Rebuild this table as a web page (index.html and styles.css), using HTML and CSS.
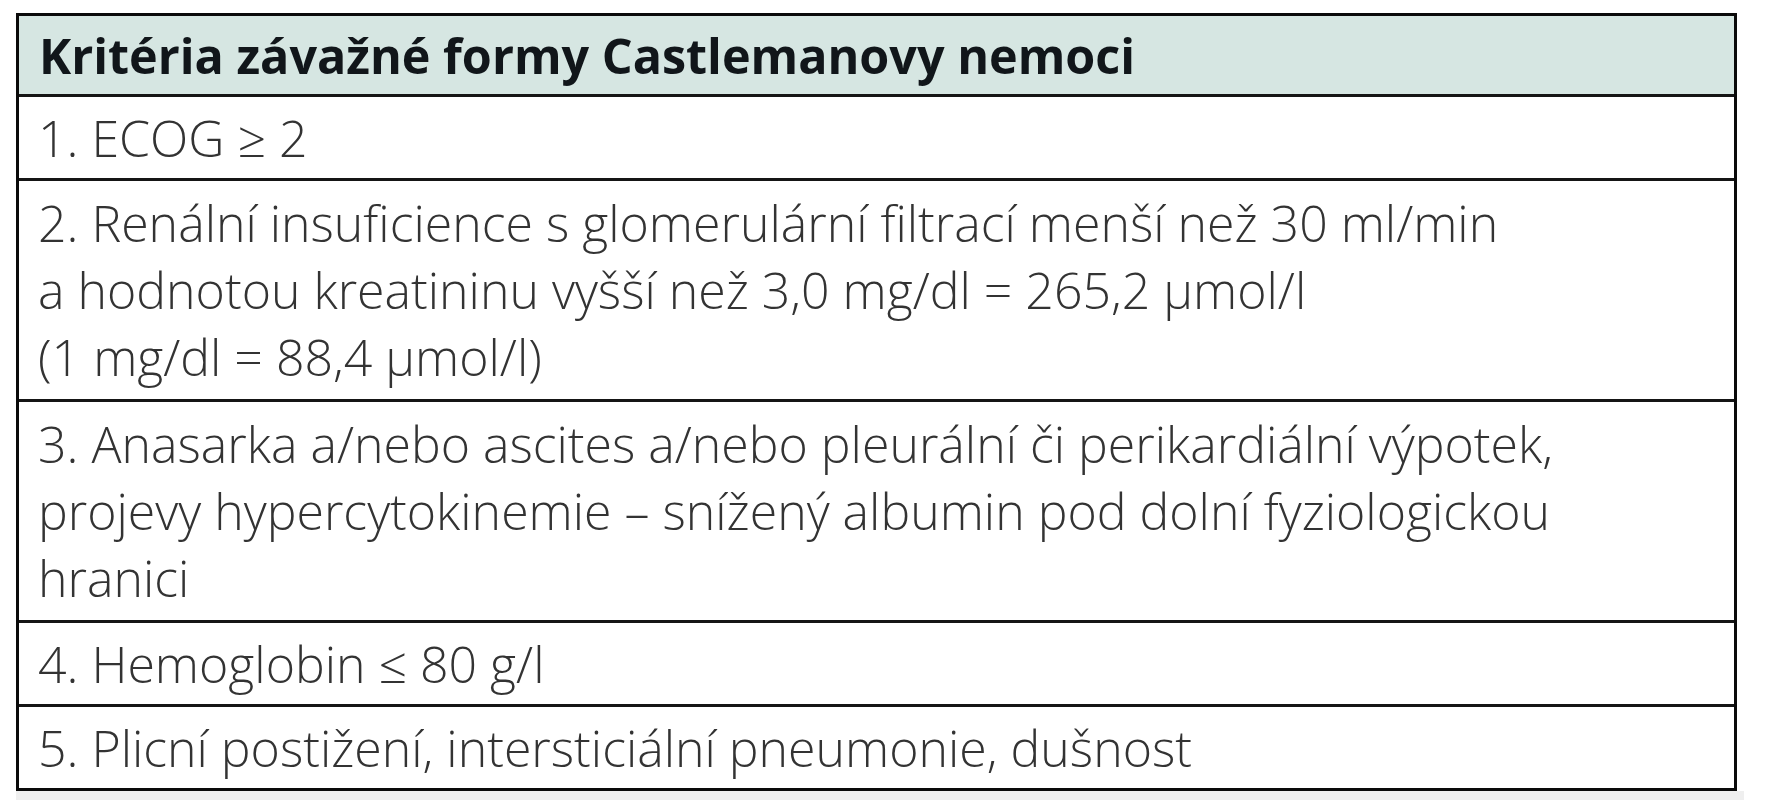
FILE: index.html
```html
<!DOCTYPE html>
<html lang="cs">
<head>
<meta charset="utf-8">
<title>Kritéria závažné formy Castlemanovy nemoci</title>
<link rel="stylesheet" href="styles.css">
</head>
<body>
<div class="page">
  <div class="table">
    <div class="row head">Kritéria závažné formy Castlemanovy nemoci</div>
    <div class="row">1. ECOG ≥ 2</div>
    <div class="row multi">2. Renální insuficience s glomerulární filtrací menší než 30 ml/min<br>a hodnotou kreatininu vyšší než 3,0 mg/dl = 265,2 µmol/l<br>(1 mg/dl = 88,4 µmol/l)</div>
    <div class="row multi">3. Anasarka a/nebo ascites a/nebo pleurální či perikardiální výpotek,<br>projevy hypercytokinemie – snížený albumin pod dolní fyziologickou<br>hranici</div>
    <div class="row">4. Hemoglobin ≤ 80 g/l</div>
    <div class="row">5. Plicní postižení, intersticiální pneumonie, dušnost</div>
  </div>
  <div class="strip"></div>
</div>
</body>
</html>
```

FILE: styles.css
```css
html, body {
  margin: 0;
  padding: 0;
  background: #ffffff;
}

.page {
  padding: 13px 0 0 16px;
}

.table {
  width: 1721px;
  box-sizing: border-box;
  border: 3px solid #0a0a0a;
  font-family: "Open Sans", "Noto Sans", sans-serif;
  background: #ffffff;
}

.row {
  padding: 8px 20px 6px 19px;
  font-size: 50px;
  font-weight: 300;
  line-height: 67px;
  color: #333333;
  white-space: nowrap;
  border-top: 3px solid #151515;
}

.row.head {
  border-top: none;
  background: #d6e6e2;
  color: #11161a;
  font-size: 48.5px;
  font-weight: 700;
  padding: 6px 20px 6px 20px;
  line-height: 66px;
}

.row.multi {
  padding: 9px 20px 8px 19px;
}

.strip {
  width: 1728px;
  height: 11px;
  background: #efefef;
}
```
